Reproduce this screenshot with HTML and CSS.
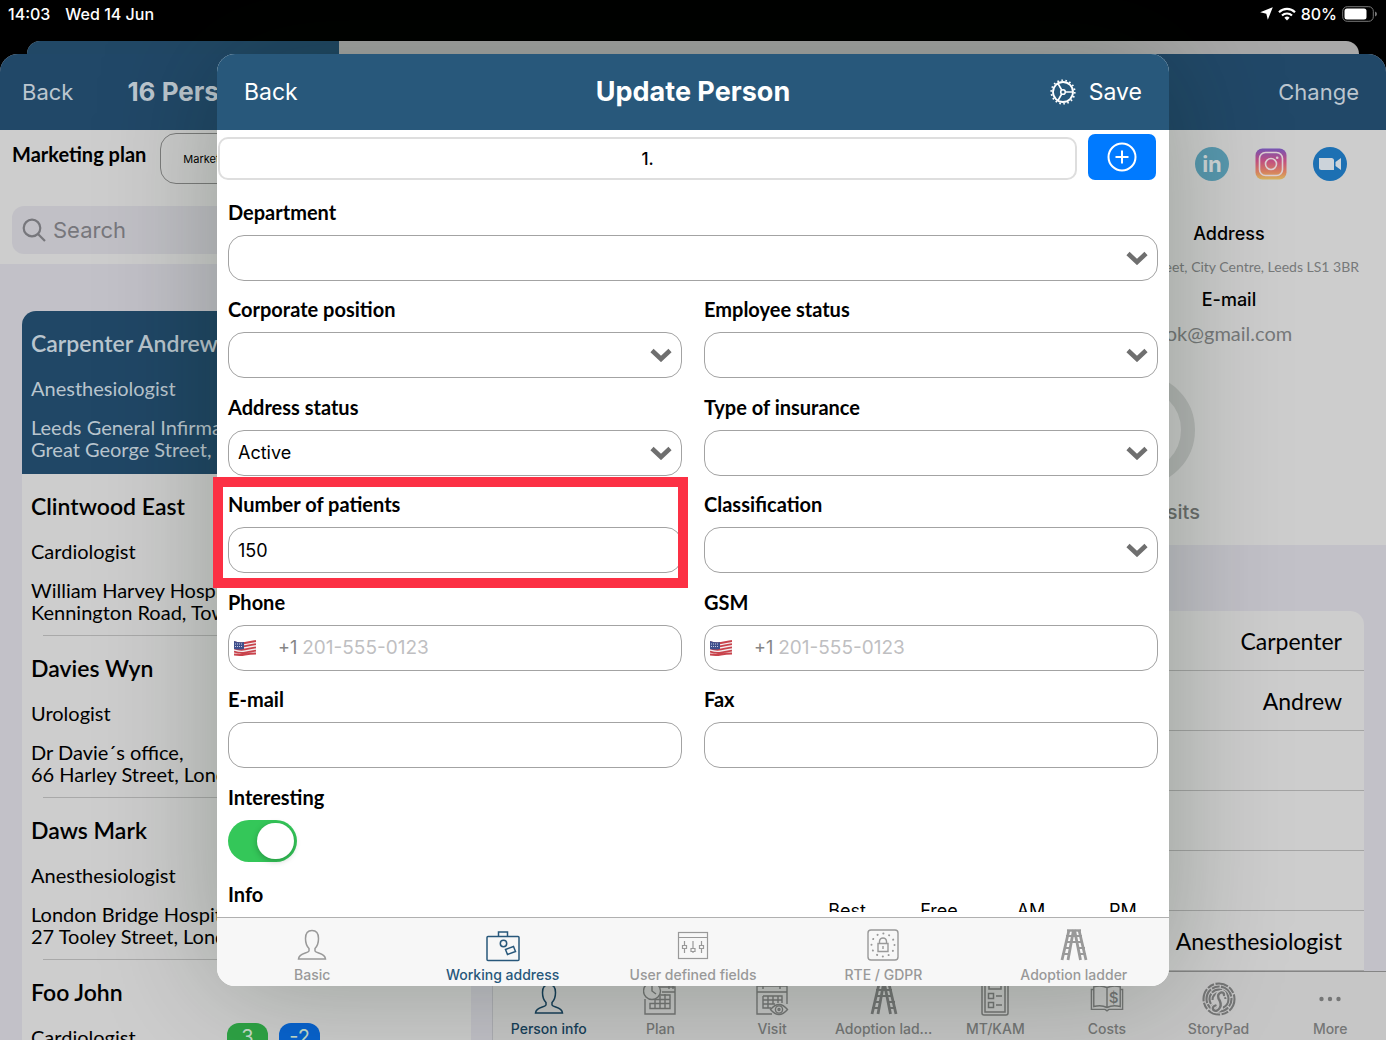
FILE: index.html
```html
<!DOCTYPE html>
<html lang="en">
<head>
    <meta charset="utf-8">
    <meta name="viewport" content="width=device-width, initial-scale=1">
    <title>Update Person</title>
    <link rel="stylesheet" href="styles.css">
</head>
<body>
    <!-- shared icons -->
    <svg class="sprite" aria-hidden="true">
        <symbol id="chevron" viewBox="0 0 22 14"><path d="M2 2.5 11 11l9-8.5" fill="none" stroke="currentColor" stroke-width="4.6"/></symbol>
        <symbol id="person" viewBox="0 0 34 34"><path d="M17 2.500C12.500 2.500 10.500 6 10.500 10.500c0 4.500 1.500 8 3.500 10v2.500c-1 2.500-10 2-10.500 8h27C30 25 21 25.500 20 23v-2.500c2-2 3.500-5.500 3.500-10C23.500 6 21.500 2.500 17 2.500z" fill="none" stroke="currentColor" stroke-width="1.500"/></symbol>
        <symbol id="ladder" viewBox="0 0 34 34">
            <path d="M10 2.500h14" stroke="currentColor" stroke-width="2.400"/>
            <path d="M12 2 5 32M16.500 2 11 32M17.500 2l6 30M22 2l7 30" stroke="currentColor" stroke-width="2.800" fill="none"/>
            <path d="M9 8h16M8 14h18M7 20h6M21 20h7M5 26h7M22 26h7" stroke="currentColor" stroke-width="1.800"/>
        </symbol>
        <symbol id="flag" viewBox="0 0 22 16">
            <path d="M0 1q6 2 11 1t11-2v14q-6 0-11 1T0 15z" fill="#f3eef0"/>
            <path d="M0 2q6 2 11 1t11-2M0 5.200q6 2 11 1t11-2M0 8.400q6 2 11 1t11-2M0 11.600q6 2 11 1t11-2M0 14.500q6 1 11 0t11-1" stroke="#c9434c" stroke-width="1.800" fill="none"/>
            <path d="M0 1q5 2 10 1v7q-5 1-10 0z" fill="#3f4f8c"/>
            <path d="M1 4h8M1 6.500h8" stroke="#c8cde2" stroke-width="1" stroke-dasharray="1 1"/>
        </symbol>
    </svg>

    <div class="statusbar">
        <span>14:03</span>
        <span class="date">Wed 14 Jun</span>
        <svg class="location" width="13" height="13" viewBox="0 0 13 13"><path d="M12.800.200 7.800 12.800 6.300 6.700.200 5.200z" fill="#fff"/></svg>
        <svg width="18" height="14" viewBox="0 0 18 14" fill="none" stroke="#fff" stroke-width="2.200"><path d="M1 5.200a11.500 11.500 0 0 1 16 0M4 8.500a7.200 7.200 0 0 1 10 0"/><path d="M9 13.500 6.400 10.700a3.700 3.700 0 0 1 5.200 0z" fill="#fff" stroke="none"/></svg>
        <span>80%</span>
        <svg width="36" height="16" viewBox="0 0 36 16"><rect x=".7" y=".7" width="30.600" height="14.600" rx="4.500" fill="none" stroke="#777"/><rect x="2.500" y="2.500" width="22" height="11" rx="2.500" fill="#fff"/><path d="M33 5.500q2 .8 2 2.500t-2 2.500z" fill="#777"/></svg>
    </div>

    <div class="back-card"><div class="back-card-side"></div></div>

    <div class="page">
        <header class="page-header">
            <button class="bar-btn" type="button">Back</button>
            <h2>16 Persons</h2>
            <button class="bar-btn change" type="button">Change</button>
        </header>

        <div class="page-main">
            <aside class="sidebar">
                <div class="filters">
                    <div class="plan-row">
                        <span class="plan-label">Marketing plan</span>
                        <button class="plan-btn" type="button">Marketing plan</button>
                    </div>
                    <label class="search">
                        <svg width="24" height="24" viewBox="0 0 24 24" fill="none" stroke="#77777c" stroke-width="2.200"><circle cx="10" cy="10" r="8.300"/><path d="m16 16 7 7"/></svg>
                        <input type="search" placeholder="Search" aria-label="Search">
                    </label>
                </div>
                <div class="persons">
                    <div class="person active">
                        <h3>Carpenter Andrew</h3>
                        <p class="job">Anesthesiologist</p>
                        <p>Leeds General Infirmary,<br>Great George Street, City</p>
                    </div>
                    <div class="person">
                        <h3>Clintwood East</h3>
                        <p class="job">Cardiologist</p>
                        <p>William Harvey Hospital,<br>Kennington Road, Town</p>
                    </div>
                    <div class="person">
                        <h3>Davies Wyn</h3>
                        <p class="job">Urologist</p>
                        <p>Dr Davie´s office,<br>66 Harley Street, London</p>
                    </div>
                    <div class="person">
                        <h3>Daws Mark</h3>
                        <p class="job">Anesthesiologist</p>
                        <p>London Bridge Hospital,<br>27 Tooley Street, London</p>
                    </div>
                    <div class="person">
                        <h3>Foo John</h3>
                        <p class="job">Cardiologist <span class="badge green">3</span><span class="badge blue">-2</span></p>
                    </div>
                </div>
            </aside>

            <section class="detail">
                <div class="contact">
                    <div class="socials">
                        <a href="#" aria-label="LinkedIn"><svg width="34" height="34" viewBox="0 0 34 34"><circle cx="17" cy="17" r="17" fill="#5898af"/><text x="17" y="25" text-anchor="middle" font-family="Inter, sans-serif" font-weight="700" font-size="22" fill="#cfd6d8">in</text></svg></a>
                        <a href="#" aria-label="Instagram"><svg width="34" height="34" viewBox="0 0 34 34">
                            <defs><linearGradient id="insta" x1="0" y1="0" x2="0" y2="1"><stop offset="0" stop-color="#7655b5"/><stop offset=".4" stop-color="#c25082"/><stop offset=".75" stop-color="#d88060"/><stop offset="1" stop-color="#d8b55f"/></linearGradient></defs>
                            <rect x="1.500" y="1.500" width="31" height="31" rx="7" fill="url(#insta)"/>
                            <g fill="none" stroke="#ddd0d4" stroke-width="1.600"><rect x="5.500" y="5.500" width="23" height="23" rx="6"/><circle cx="17" cy="17" r="5.500"/></g><circle cx="23.200" cy="10.800" r="1.300" fill="#ddd0d4"/></svg></a>
                        <a href="#" aria-label="Video call"><svg width="34" height="34" viewBox="0 0 34 34"><circle cx="17" cy="17" r="17" fill="#1d70b3"/><path d="M6 11h12.500q2.500 0 2.500 2.500V23H8.500Q6 23 6 20.500zM22.500 15l5.500-4v12l-5.500-4z" fill="#ccd3da"/></svg></a>
                    </div>
                    <dl class="contact-info">
                        <dt>Address</dt>
                        <dd class="small">George Street, City Centre, Leeds LS1 3BR</dd>
                        <dt>E-mail</dt>
                        <dd>ok@gmail.com</dd>
                    </dl>
                    <div class="visits">
                        <div class="ring"></div>
                        <span>Visits</span>
                    </div>
                </div>
                <ul class="info-list">
                    <li>Carpenter</li>
                    <li>Andrew</li>
                    <li></li>
                    <li></li>
                    <li></li>
                    <li>Anesthesiologist</li>
                </ul>
                <nav class="tabs">
                    <a href="#" class="selected"><svg><use href="#person"/></svg>Person info</a>
                    <a href="#"><svg viewBox="0 0 34 34" fill="none" stroke="currentColor" stroke-width="1.400"><path d="M17 5h15v27H2V17M19 10h13M26 2v5M30 2v5"/><circle cx="9" cy="9" r="8.500"/><path d="M9 3v6l4 3M12 17.500h15v9H7v-5h20M12 17.500v9M17 14v12.500M22 12v14.500M17 13h10v9"/></svg>Plan</a>
                    <a href="#"><svg viewBox="0 0 34 34" fill="none" stroke="currentColor" stroke-width="1.400"><path d="M17 32H2V4h30v18M2 10h30M8 1v6M25 1v6M8 14h19v7M8 14v12h8M8 18h19M8 22h12M13 14v12M18 14v8M23 14v7"/><path d="M15.500 27.500q8.500-10 17 0-8.500 10-17 0z"/><circle cx="24" cy="27.500" r="3.600"/><circle cx="24" cy="27.500" r="1"/></svg>Visit</a>
                    <a href="#"><svg><use href="#ladder"/></svg>Adoption lad...</a>
                    <a href="#"><svg viewBox="0 0 34 34" fill="none" stroke="currentColor" stroke-width="1.500"><rect x="4" y="2" width="26" height="31" rx="2"/><path d="M7 4v26h20V4M11 4v3h12V4"/><path d="M10.500 11.500h5v5h-5zM10.500 20.500h5v5h-5zM18 14h6M18 23h6"/></svg>MT/KAM</a>
                    <a href="#"><svg viewBox="0 0 36 34" fill="none" stroke="currentColor" stroke-width="1.500"><path d="M4 4v21q8-2 14 1 6-3 14-1V4q-8-2-14 1Q12 2 4 4zM18 5v21M4 7H1.500v21H16l2 1.500 2-1.500h14.500V7H32"/><text x="25" y="21" text-anchor="middle" font-size="16" font-family="Inter, sans-serif" fill="currentColor" stroke="none">$</text></svg>Costs</a>
                    <a href="#"><svg viewBox="0 0 34 34" fill="none" stroke="currentColor">
                        <g stroke-width="2.100"><circle cx="17" cy="17" r="15.500" stroke-dasharray="13 1.500 7 1.500"/><circle cx="17" cy="17" r="12.500" stroke-dasharray="8 1.300 15 1.300"/><circle cx="17" cy="17" r="9.500" stroke-dasharray="11 1.200"/><path d="M10.500 18a6.500 6.500 0 0 1 13-1"/></g>
                        <g stroke-linecap="round"><path d="M22 13q0-3-3-2.500-4 1.500-2.500 6 3.500 5 1.500 9-3 5-6.500 2.500-2-3 2-4.500" stroke="#c4c4c4" stroke-width="5"/><path d="M22 13q0-3-3-2.500-4 1.500-2.500 6 3.500 5 1.500 9-3 5-6.500 2.500-2-3 2-4.500" stroke-width="2.400"/></g></svg>StoryPad</a>
                    <a href="#"><svg viewBox="0 0 34 34" fill="currentColor"><circle cx="8.500" cy="17" r="2.200"/><circle cx="17" cy="17" r="2.200"/><circle cx="25.500" cy="17" r="2.200"/></svg>More</a>
                </nav>
            </section>
        </div>
    </div>

    <form class="modal">
        <header class="modal-header">
            <button class="bar-btn" type="button">Back</button>
            <h1>Update Person</h1>
            <div class="actions">
                <button class="bar-btn" type="button" aria-label="Settings">
                    <svg width="26" height="26" viewBox="0 0 26 26" fill="none" stroke="#fff"><circle cx="13" cy="13" r="10" stroke-width="1.800"/><circle cx="13" cy="13" r="11.700" stroke-width="1.800" stroke-dasharray="1.600 2.484"/><circle cx="13" cy="13" r="2.300" stroke-width="1.600"/><path d="M15.500 13H23M11.700 11 8 4.500M11.700 15 8 21.500" stroke-width="1.600"/></svg>
                </button>
                <button class="bar-btn" type="submit">Save</button>
            </div>
        </header>

        <div class="address-row">
            <button class="address-tab" type="button">1.</button>
            <button class="add-btn" type="button" aria-label="Add address">
                <svg width="30" height="30" viewBox="0 0 30 30" fill="none" stroke="#fff" stroke-width="2"><circle cx="15" cy="15" r="13.500"/><path d="M15 8.500v13M8.500 15h13"/></svg>
            </button>
        </div>

        <div class="fields">
            <div class="field wide">
                <label for="department">Department</label>
                <div class="select"><select id="department"><option></option></select><svg><use href="#chevron"/></svg></div>
            </div>
            <div class="field">
                <label for="position">Corporate position</label>
                <div class="select"><select id="position"><option></option></select><svg><use href="#chevron"/></svg></div>
            </div>
            <div class="field">
                <label for="employee">Employee status</label>
                <div class="select"><select id="employee"><option></option></select><svg><use href="#chevron"/></svg></div>
            </div>
            <div class="field">
                <label for="status">Address status</label>
                <div class="select"><select id="status"><option>Active</option></select><svg><use href="#chevron"/></svg></div>
            </div>
            <div class="field">
                <label for="insurance">Type of insurance</label>
                <div class="select"><select id="insurance"><option></option></select><svg><use href="#chevron"/></svg></div>
            </div>
            <div class="field highlight">
                <label for="patients">Number of patients</label>
                <input class="control" id="patients" type="text" inputmode="numeric" value="150">
            </div>
            <div class="field">
                <label for="classification">Classification</label>
                <div class="select"><select id="classification"><option></option></select><svg><use href="#chevron"/></svg></div>
            </div>
            <div class="field">
                <label for="phone">Phone</label>
                <div class="control phone"><svg><use href="#flag"/></svg><span>+1</span><input id="phone" type="tel" placeholder="201-555-0123"></div>
            </div>
            <div class="field">
                <label for="gsm">GSM</label>
                <div class="control phone"><svg><use href="#flag"/></svg><span>+1</span><input id="gsm" type="tel" placeholder="201-555-0123"></div>
            </div>
            <div class="field">
                <label for="email">E-mail</label>
                <input class="control" id="email" type="email">
            </div>
            <div class="field">
                <label for="fax">Fax</label>
                <input class="control" id="fax" type="tel">
            </div>
            <div class="field">
                <label for="interesting">Interesting</label>
                <input class="toggle" id="interesting" type="checkbox" checked>
            </div>
        </div>

        <div class="info-row">
            <strong>Info</strong>
            <div class="slots"><span>Best</span><span>Free</span><span>AM</span><span>PM</span></div>
        </div>

        <nav class="tabs modal-tabs">
            <a href="#"><svg><use href="#person"/></svg>Basic</a>
            <a href="#" class="selected"><svg viewBox="0 0 34 34" fill="none" stroke="currentColor" stroke-width="1.500"><rect x="1" y="8.500" width="32" height="24" rx="1"/><path d="M12.500 8V4h9v4"/><circle cx="17.500" cy="15.500" r="3.200"/><path d="m19.500 21.500 8-3 2 5-8 3z"/></svg>Working address</a>
            <a href="#"><svg viewBox="0 0 34 34" fill="none" stroke="currentColor" stroke-width="1.200"><rect x="2.500" y="4.500" width="29" height="26"/><path d="M2.500 9.500h29M8.500 13v12M17 13v12M25.500 13v12"/><g fill="#f7f7f7"><path d="M6.500 17.500h4v3h-4zM15 20.500h4v3h-4zM23.500 17.500h4v3h-4z"/></g></svg>User defined fields</a>
            <a href="#"><svg viewBox="0 0 34 34" fill="none" stroke="currentColor" stroke-width="1.400"><rect x="2" y="2" width="30" height="30" rx="3"/><path d="M12 15.500h10v8H12zM13.500 15.500V13q.5-3 3.500-3t3.500 3v2.500M17 18v3"/><circle cx="17" cy="17" r="11.500" stroke-width="2" stroke-linecap="round" stroke-dasharray=".1 5.921"/></svg>RTE / GDPR</a>
            <a href="#"><svg><use href="#ladder"/></svg>Adoption ladder</a>
        </nav>
    </form>
</body>
</html>
```
FILE: styles.css
```css
*{
    box-sizing: border-box;
}
body{
    margin: 0;
    height: 100vh;
    overflow: hidden;
    position: relative;
    display: flex;
    flex-direction: column;
    background-color: #000;
    color: #000;
    font-family: Inter, "Liberation Sans", sans-serif;
}
h1, h2, h3, p, ul, dl, dd{
    margin: 0;
    padding: 0;
}
button, input, select{
    font-family: inherit;
    color: inherit;
}
button{
    border: none;
    background: none;
    padding: 0;
    cursor: pointer;
}
a{
    color: inherit;
    text-decoration: none;
}
svg{
    display: block;
    flex: none;
}
.sprite{
    position: absolute;
    width: 0;
    height: 0;
}

/* status bar */
.statusbar{
    flex: none;
    height: 41px;
    padding: 0 8px 14px;
    display: flex;
    align-items: center;
    gap: 5px;
    color: #fff;
    font-size: 16px;
    font-weight: 500;
}
.date{
    margin-left: 10px;
}
.location{
    margin-left: auto;
}

/* page behind the modal */
.back-card{
    flex: none;
    height: 13px;
    margin: 0 27px;
    border-radius: 14px 14px 0 0;
    background-color: #a8a8a8;
    overflow: hidden;
}
.back-card-side{
    width: 312px;
    height: 100%;
    background-color: #214866;
}
.page{
    flex: 1;
    min-height: 0;
    display: flex;
    flex-direction: column;
    border-radius: 18px 18px 0 0;
    overflow: hidden;
    background-color: #c2c1c8;
}
.page-header{
    flex: none;
    height: 76px;
    padding: 0 27px 0 22px;
    display: flex;
    align-items: center;
    background-color: #214868;
    color: #bcc6cf;
}
.page-header h2{
    margin-left: 54px;
    font-size: 26px;
    line-height: 32px;
    font-weight: 700;
}
.bar-btn{
    font-size: 23px;
    line-height: 32px;
}
.page-header .bar-btn{
    font-size: 22px;
}
.change{
    margin-left: auto;
}
.page-main{
    flex: 1;
    min-height: 0;
    display: flex;
}
.sidebar{
    flex: none;
    width: 493px;
    border-right: 1px solid #aeaeb4;
    overflow: hidden;
}
.filters{
    height: 134px;
    padding: 3px 11px 0 12px;
    background-color: #cdcdcd;
}
.plan-row{
    display: flex;
    gap: 14px;
}
.plan-label{
    line-height: 42px;
    font-family: Lato, sans-serif;
    font-size: 20px;
    font-weight: 700;
}
.plan-btn{
    flex: 1;
    height: 51px;
    padding-left: 22px;
    border: 1px solid #7d7d7d;
    border-radius: 16px;
    font-size: 11px;
    text-align: left;
}
.search{
    height: 48px;
    margin-top: 22px;
    padding: 0 10px;
    display: flex;
    align-items: center;
    gap: 5px;
    border-radius: 12px;
    background-color: #c1c0c6;
}
.search input{
    flex: 1;
    min-width: 0;
    border: none;
    background: none;
    font-size: 22px;
}
.search input::placeholder{
    color: #77777c;
}
.persons{
    margin: 47px 21px 0 22px;
    border-radius: 14px 14px 0 0;
    background-color: #cdcdcd;
    overflow: hidden;
    font-family: Lato, sans-serif;
}
.person{
    position: relative;
    height: 162px;
    padding: 18px 9px 0;
}
.person::after{
    content: "";
    position: absolute;
    left: 21px;
    right: 0;
    bottom: 0;
    border-bottom: 1px solid #a9a9a9;
}
.person h3{
    font-size: 23px;
    line-height: 28px;
    font-weight: 600;
}
.person p{
    font-size: 20px;
    line-height: 22px;
    white-space: nowrap;
}
.person .job{
    margin: 17px 0 14px;
    line-height: 28px;
    display: grid;
    grid-template-columns: 185px 41px 41px;
    column-gap: 11px;
}
.person.active{
    height: 163px;
    background-color: #204766;
    color: #b9c5ce;
}
.person.active::after{
    border: none;
}
.badge{
    height: 28px;
    border-radius: 12px;
    color: #c4dac9;
    text-align: center;
    font-family: Inter, sans-serif;
}
.green{
    background-color: #2ea345;
}
.blue{
    background-color: #0863cf;
}

.detail{
    flex: 1;
    min-width: 0;
    display: flex;
    flex-direction: column;
}
.contact{
    flex: none;
    height: 415px;
    padding: 17px 27px 0;
    background-color: #cdcdcd;
    display: flex;
    flex-direction: column;
    align-items: flex-end;
}
.socials{
    display: flex;
    gap: 25px;
    margin-right: 12px;
}
.contact-info{
    margin-top: 40px;
    text-align: center;
}
.contact-info dt{
    font-size: 18px;
    line-height: 26px;
    font-weight: 500;
}
.contact-info dd{
    font-family: Lato, sans-serif;
    font-size: 20px;
    line-height: 40px;
    color: #77797a;
}
.contact-info .small{
    font-size: 14px;
}
.visits{
    width: 117px;
    margin: 21px 159px 0 0;
    text-align: right;
    font-size: 20px;
    line-height: 28px;
    font-weight: 500;
    color: #6c6e6d;
}
.ring{
    width: 112px;
    height: 112px;
    margin-bottom: 12px;
    border: 14px solid #b5b7b6;
    border-radius: 50%;
}
.info-list{
    flex: 1;
    min-height: 0;
    margin: 66px 22px 0;
    border-radius: 14px 14px 0 0;
    background-color: #cdcdcd;
    overflow: hidden;
    list-style: none;
    font-family: Lato, sans-serif;
    font-size: 23px;
    text-align: right;
}
.info-list li{
    height: 60px;
    padding: 0 22px;
    line-height: 60px;
    border-bottom: 1px solid #a4a4a4;
}

/* tab bars */
.tabs{
    flex: none;
    height: 69px;
    padding-top: 10px;
    display: flex;
    border-top: 1px solid #858585;
    background-color: #c6c6c6;
    color: #757676;
}
.tabs a{
    flex: 1 1 0;
    display: flex;
    flex-direction: column;
    align-items: center;
    font-size: 14px;
    line-height: 26px;
    font-weight: 500;
    white-space: nowrap;
}
.tabs svg{
    width: 34px;
    height: 34px;
}
.tabs .selected{
    color: #173f5a;
}

/* modal */
.modal{
    position: absolute;
    top: 54px;
    left: 0;
    right: 0;
    bottom: 54px;
    width: 952px;
    max-width: 92%;
    margin: 0 auto;
    display: flex;
    flex-direction: column;
    border-radius: 18px;
    background-color: #fff;
    box-shadow: 0 0 120px rgba(0, 25, 0, 0.27);
}
.modal-header{
    flex: none;
    height: 76px;
    padding: 0 27px;
    display: grid;
    grid-template-columns: 1fr auto 1fr;
    align-items: center;
    justify-items: start;
    border-radius: 18px 18px 0 0;
    background-color: #28587b;
    color: #fff;
}
.modal-header h1{
    font-size: 27px;
    line-height: 32px;
    font-weight: 700;
}
.actions{
    justify-self: end;
    display: flex;
    align-items: center;
    gap: 13px;
}
.address-row{
    flex: none;
    height: 69px;
    padding: 4px 13px 0 1px;
    display: flex;
    gap: 11px;
}
.address-tab{
    flex: 1;
    height: 43px;
    margin-top: 3px;
    border: 2px solid #dedede;
    border-radius: 10px;
    font-size: 17px;
    font-weight: 500;
}
.add-btn{
    width: 68px;
    height: 46px;
    display: flex;
    align-items: center;
    justify-content: center;
    border-radius: 7px;
    background-color: #007aff;
}
.fields{
    flex: 1;
    padding: 0 11px;
    display: grid;
    grid-template-columns: 1fr 1fr;
    grid-auto-rows: 1fr;
    column-gap: 22px;
}
.field{
    position: relative;
}
.field label{
    display: block;
    margin-bottom: 10px;
    line-height: 26px;
}
.field label, .info-row strong{
    font-family: Lato, sans-serif;
    font-size: 20px;
    font-weight: 700;
}
.wide{
    grid-column: span 2;
}
.control, select{
    display: block;
    width: 100%;
    height: 46px;
    padding: 0 9px;
    border: 1px solid #a3a3a3;
    border-radius: 16px;
    background-color: #fff;
    font-size: 18px;
}
.select{
    position: relative;
}
select{
    appearance: none;
}
.select svg{
    position: absolute;
    top: 16px;
    right: 10px;
    width: 22px;
    height: 14px;
    color: #6f6f6f;
    pointer-events: none;
}
.phone{
    display: flex;
    align-items: center;
    padding: 0 5px;
    color: #858585;
}
.phone svg{
    width: 22px;
    height: 16px;
    margin-right: 22px;
}
.phone input{
    flex: 1;
    min-width: 0;
    padding: 0 5px;
    border: none;
    background: none;
    font-size: 19px;
}
.phone input::placeholder{
    color: #bfbfc2;
}
.highlight::after{
    content: "";
    position: absolute;
    top: -14px;
    right: -6px;
    bottom: 1px;
    left: -15px;
    border: 10px solid #fc3044;
    pointer-events: none;
}
.toggle{
    appearance: none;
    display: block;
    width: 69px;
    height: 42px;
    margin: 0;
    padding: 3px;
    border-radius: 21px;
    background-color: #34c759;
}
.toggle::before{
    content: "";
    display: block;
    width: 37px;
    height: 36px;
    margin-left: auto;
    border-radius: 18px;
    background-color: #fff;
    box-shadow: 0 2px 6px rgba(0, 0, 0, 0.25);
}
.info-row{
    flex: none;
    height: 31px;
    margin: 0 0 5px;
    padding: 0 0 0 11px;
    display: flex;
    justify-content: space-between;
    overflow: hidden;
}
.info-row strong{
    line-height: 26px;
}
.slots{
    display: flex;
    padding-top: 18px;
    font-size: 18px;
    line-height: 24px;
    text-align: center;
}
.slots span{
    width: 92px;
}
.modal-tabs{
    border-color: #b0b0b0;
    border-radius: 0 0 18px 18px;
    background-color: #f7f7f7;
    color: #999;
}
.modal-tabs .selected{
    color: #28587b;
}
```
